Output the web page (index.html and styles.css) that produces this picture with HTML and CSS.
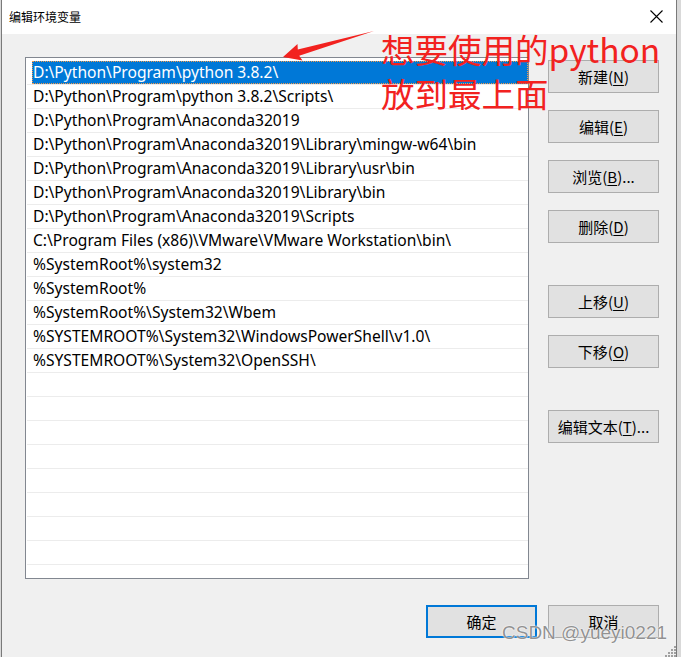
FILE: index.html
```html
<!DOCTYPE html>
<html lang="zh">
<head>
<meta charset="utf-8">
<title>编辑环境变量</title>
<link rel="stylesheet" href="styles.css">
</head>
<body>
<div class="win">
  <div class="titlebar">
    <span class="title">编辑环境变量</span>
    <svg class="close" width="13" height="13" viewBox="0 0 13 13"><path d="M0.5 0.5 L12.5 12.5 M12.5 0.5 L0.5 12.5" stroke="#000" stroke-width="1.1" fill="none"/></svg>
  </div>
  <div class="content">
    <div class="main">
      <div class="list">
        <div class="row sel"><span class="hl">D:\Python\Program\python 3.8.2\</span></div>
        <div class="row">D:\Python\Program\python 3.8.2\Scripts\</div>
        <div class="row">D:\Python\Program\Anaconda32019</div>
        <div class="row">D:\Python\Program\Anaconda32019\Library\mingw-w64\bin</div>
        <div class="row">D:\Python\Program\Anaconda32019\Library\usr\bin</div>
        <div class="row">D:\Python\Program\Anaconda32019\Library\bin</div>
        <div class="row">D:\Python\Program\Anaconda32019\Scripts</div>
        <div class="row">C:\Program Files (x86)\VMware\VMware Workstation\bin\</div>
        <div class="row">%SystemRoot%\system32</div>
        <div class="row">%SystemRoot%</div>
        <div class="row">%SystemRoot%\System32\Wbem</div>
        <div class="row">%SYSTEMROOT%\System32\WindowsPowerShell\v1.0\</div>
        <div class="row">%SYSTEMROOT%\System32\OpenSSH\</div>
        <div class="row"></div><div class="row"></div><div class="row"></div><div class="row"></div>
        <div class="row"></div><div class="row"></div><div class="row"></div><div class="row"></div>
        <div class="row"></div>
      </div>
      <div class="side">
        <button class="btn">新建(<u>N</u>)</button>
        <button class="btn">编辑(<u>E</u>)</button>
        <button class="btn">浏览(<u>B</u>)...</button>
        <button class="btn">删除(<u>D</u>)</button>
        <button class="btn far">上移(<u>U</u>)</button>
        <button class="btn">下移(<u>O</u>)</button>
        <button class="btn far">编辑文本(<u>T</u>)...</button>
      </div>
    </div>
    <div class="foot">
      <button class="btn def">确定</button>
      <button class="btn">取消</button>
    </div>
  </div>

  <svg class="arrow" width="100" height="40" viewBox="280 25 100 40">
    <polygon points="282,57 296.5,44 296.8,49.6 373,31 298.2,55.8 301.5,60.5" fill="#f2221f"/>
  </svg>
  <div class="note">想要使用的python<br>放到最上面</div>
  <div class="mark">CSDN @yueyi0221</div>
  <svg class="grip" width="12" height="12" viewBox="0 0 12 12">
    <rect x="9" y="1" width="2" height="2" fill="#a0a0a0"/>
    <rect x="6" y="4" width="2" height="2" fill="#a0a0a0"/>
    <rect x="9" y="4" width="2" height="2" fill="#a0a0a0"/>
    <rect x="3" y="7" width="2" height="2" fill="#a0a0a0"/>
    <rect x="6" y="7" width="2" height="2" fill="#a0a0a0"/>
    <rect x="9" y="7" width="2" height="2" fill="#a0a0a0"/>
    <rect x="0" y="10" width="2" height="2" fill="#a0a0a0"/>
    <rect x="3" y="10" width="2" height="2" fill="#a0a0a0"/>
    <rect x="6" y="10" width="2" height="2" fill="#a0a0a0"/>
    <rect x="9" y="10" width="2" height="2" fill="#a0a0a0"/>
  </svg>
</div>
</body>
</html>
```

FILE: styles.css
```css
* { box-sizing: border-box; }
html, body { margin: 0; padding: 0; }
body {
  background: #d9d9d9;
  width: 681px;
  height: 657px;
  overflow: hidden;
  font-family: "Noto Sans", "Noto Sans CJK SC", sans-serif;
}
.win {
  position: relative;
  margin-left: 1px;
  width: 676px;
  height: 657px;
  background: #f0f0f0;
  border-left: 1px solid #7a7a7a;
  border-right: 1px solid #7a7a7a;
}
.titlebar {
  height: 34px;
  background: #fff;
  display: flex;
  align-items: center;
  justify-content: space-between;
  padding: 0 13px 2px 7px;
}
.title {
  font-family: "Noto Sans CJK SC", sans-serif;
  font-size: 12px;
  color: #000;
}
.close { display: block; }
.content {
  padding: 23px 17px 0 23px;
}
.main {
  display: flex;
  align-items: flex-start;
}
.list {
  width: 504px;
  height: 522px;
  border: 1px solid #828790;
  background: #fff;
  padding-top: 3px;
  overflow: hidden;
  margin-right: 19px;
}
.row {
  height: 24px;
  margin-left: 1px;
  border-bottom: 1px solid #ececec;
  padding-left: 6px;
  font-size: 15.6px;
  line-height: 23px;
  color: #000;
  white-space: nowrap;
}
.row.sel { padding-left: 5px; }
.hl {
  display: block;
  height: 23px;
  padding-left: 1px;
  background: #0078d7;
  color: #fff;
  outline: 1px dotted #f39a4a;
  outline-offset: -1px;
}
.side {
  display: flex;
  flex-direction: column;
  padding-top: 3px;
  gap: 17px;
}
.btn {
  width: 111px;
  height: 33px;
  background: #e1e1e1;
  border: 1px solid #adadad;
  font-family: "Noto Sans CJK SC", sans-serif;
  font-size: 15px;
  color: #000;
  padding: 0;
  margin: 0;
}
.btn u { text-decoration-thickness: 1px; text-underline-offset: 2px; }
.side .far { margin-top: 25px; }
.foot {
  display: flex;
  justify-content: flex-end;
  gap: 11px;
  margin-top: 26px;
}
.btn.def { border: 2px solid #0078d7; }
.arrow {
  position: absolute;
  left: 279px;
  top: 25px;
}
.note {
  position: absolute;
  left: 379px;
  top: 27px;
  font-family: "Noto Sans CJK SC", sans-serif;
  font-size: 33.5px;
  line-height: 44px;
  color: #f2221f;
  white-space: nowrap;
}
.mark {
  position: absolute;
  left: 500px;
  top: 622px;
  font-family: "Liberation Sans", sans-serif;
  font-size: 19px;
  color: rgba(110, 110, 110, 0.75);
  text-shadow: 0 0 2px #fff, 0 0 1px #fff;
  white-space: nowrap;
}
.grip {
  position: absolute;
  left: 663px;
  top: 645px;
}
```
